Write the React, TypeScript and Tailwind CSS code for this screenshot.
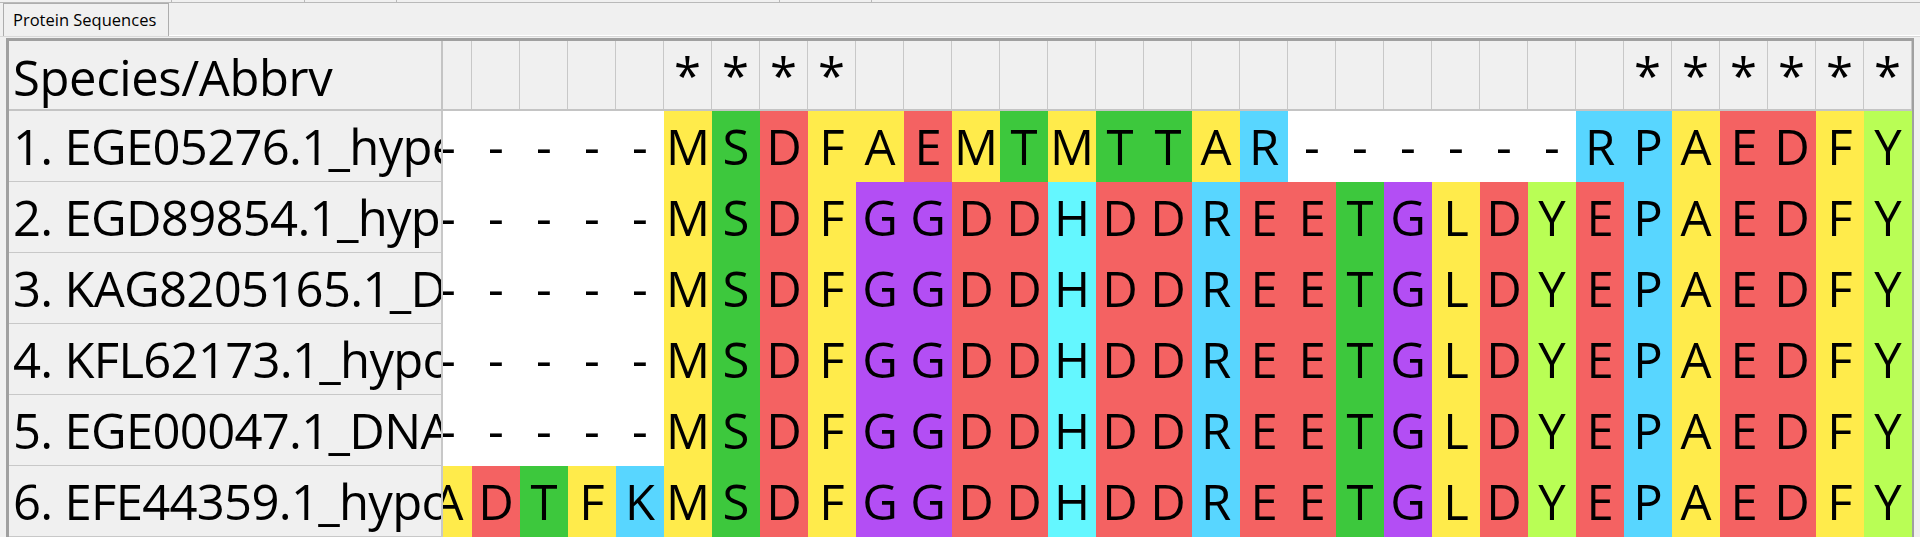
import React from 'react';

const COLORS: Record<string, string> = {
  A: 'bg-[#ffeb4b]',
  M: 'bg-[#ffeb4b]',
  F: 'bg-[#ffeb4b]',
  L: 'bg-[#ffeb4b]',
  S: 'bg-[#3dc83d]',
  T: 'bg-[#3dc83d]',
  D: 'bg-[#f46262]',
  E: 'bg-[#f46262]',
  G: 'bg-[#b34ef4]',
  H: 'bg-[#64f7ff]',
  R: 'bg-[#58d6ff]',
  K: 'bg-[#58d6ff]',
  P: 'bg-[#58d6ff]',
  Y: 'bg-[#b9fe55]',
  '-': 'bg-white',
};

const rows = [
  { name: '1. EGE05276.1_hypersensitive_response_protein', seq: '-----MSDFAEMTMTTAR------RPAEDFY' },
  { name: '2. EGD89854.1_hypothetical_protein_TERG_01611', seq: '-----MSDFGGDDHDDREETGLDYEPAEDFY' },
  { name: '3. KAG8205165.1_DNA_repair_protein_rad5', seq: '-----MSDFGGDDHDDREETGLDYEPAEDFY' },
  { name: '4. KFL62173.1_hypothetical_protein_H109_05240', seq: '-----MSDFGGDDHDDREETGLDYEPAEDFY' },
  { name: '5. EGE00047.1_DNA_repair_protein_RAD5', seq: '-----MSDFGGDDHDDREETGLDYEPAEDFY' },
  { name: '6. EFE44359.1_hypothetical_protein_TRV_00858', seq: 'ADTFKMSDFGGDDHDDREETGLDYEPAEDFY' },
];

// conserved columns marked in the header
const stars = new Set([5, 6, 7, 8, 25, 26, 27, 28, 29, 30]);

const App: React.FC = () => {
  return (
    <div className="w-[1920px] h-[537px] overflow-hidden bg-[#f0f0f0] text-black font-['Open_Sans',sans-serif]">
      {/* toolbar edge */}
      <div className="h-[3px] flex border-b border-[#b9b9b9]">
        <div className="w-[172px] border-r border-[#b9b9b9]"></div>
        <div className="w-[133px] border-r border-[#b9b9b9]"></div>
        <div className="w-[92px] border-r border-[#b9b9b9]"></div>
        <div className="w-[383px] border-r border-[#b9b9b9]"></div>
        <div className="w-[92px] border-r border-[#b9b9b9]"></div>
        <div className="flex-1"></div>
      </div>

      {/* tab strip */}
      <div className="h-[34px] flex items-end border-b border-[#d9d9d9]">
        <div className="ml-[3px] w-[166px] h-[33px] border-l border-t border-r border-[#adadad] bg-[#f0f0f0] flex items-center pl-[9px] text-[16.5px] leading-none">
          Protein Sequences
        </div>
        <div className="flex-1 border-b border-white"></div>
      </div>

      {/* alignment grid */}
      <div className="ml-[6px] mt-[1px] w-[1908px] border-l-[3px] border-t-[3px] border-r-2 border-[#a0a0a0]">
        {/* header */}
        <div className="h-[70px] flex border-b-2 border-[#c4c4c4]">
          <div className="w-[434px] shrink-0 border-r-2 border-[#c4c4c4] flex items-center pl-[4px] pt-[4px] text-[49px] leading-none tracking-[-0.4px] whitespace-nowrap overflow-hidden">
            Species/Abbrv
          </div>
          <div className="flex-1 overflow-hidden">
            <div className="flex -ml-[19px] h-full">
              {Array.from({ length: 31 }).map((_, i) => (
                <div key={i} className="w-[48px] shrink-0 h-full border-r border-[#c8c8c8] flex items-center justify-center text-[49px] leading-none">
                  {stars.has(i) ? '*' : ''}
                </div>
              ))}
            </div>
          </div>
        </div>

        {/* sequences */}
        {rows.map((row) => (
          <div key={row.name} className="h-[71px] flex">
            <div className="w-[434px] shrink-0 border-r-2 border-b border-[#c8c8c8] flex items-center pl-[4px] text-[49px] leading-none tracking-[-0.7px] whitespace-nowrap overflow-hidden">
              {row.name}
            </div>
            <div className="flex-1 overflow-hidden">
              <div className="flex -ml-[19px] h-full">
                {row.seq.split('').map((c, i) => (
                  <div key={i} className={`w-[48px] shrink-0 h-full flex items-center justify-center text-[49px] leading-none ${COLORS[c]}`}>
                    {c}
                  </div>
                ))}
              </div>
            </div>
          </div>
        ))}
      </div>
    </div>
  );
};

export default App;
